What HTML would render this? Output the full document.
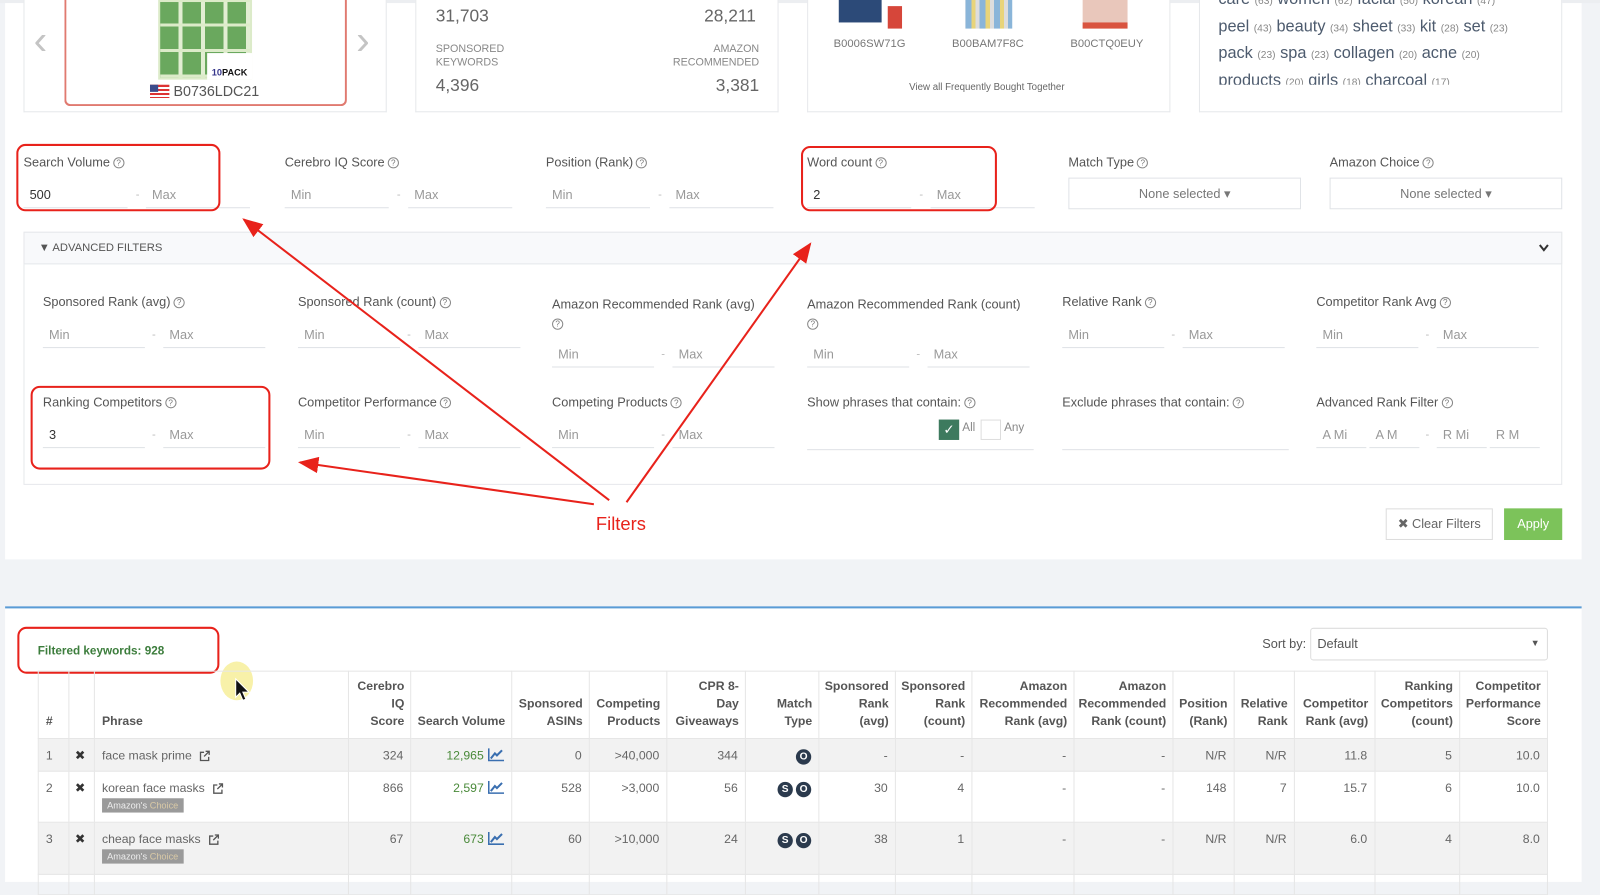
<!DOCTYPE html>
<html><head><meta charset="utf-8">
<style>
*{margin:0;padding:0;box-sizing:border-box}
html,body{width:1600px;height:882px;overflow:hidden;background:#f1f3f6;font-family:"Liberation Sans",sans-serif;color:#555}
#w{position:absolute;left:0;top:0;width:1568px;height:864px;transform-origin:0 0;transform:scale(1.0204,1.0208);background:#f1f3f6}
.a{position:absolute;white-space:nowrap}
.card{position:absolute;background:#fff;border:1px solid #e6e8eb;border-top:none}
.lbl{position:absolute;font-size:12.5px;color:#555;white-space:nowrap}
.q{display:inline-block;width:11px;height:11px;border:1px solid #888;border-radius:50%;font-size:8px;line-height:9px;text-align:center;color:#777;vertical-align:1px;margin-left:3px}
.u{position:absolute;border-bottom:1px solid #dfe2e6;font-size:12.5px;color:#999;padding-left:6px;padding-top:3px;height:23px}
.d{position:absolute;font-size:11px;color:#bbb}
.rb{position:absolute;border:2px solid #e8221b;border-radius:9px}
.sel{position:absolute;background:#fff;border:1px solid #e0e3e7;font-size:12.5px;color:#777;text-align:center;line-height:30px}
table{border-collapse:collapse;position:absolute;left:37px;top:657px;width:1480px;font-size:12px;color:#666}
th{font-weight:bold;color:#555;text-align:right;vertical-align:bottom;padding:0 6px 8px 4px;line-height:17px;border:1px solid #e6e6e6;height:66px}
td{text-align:right;vertical-align:top;padding:9px 7px 0 4px;border:1px solid #e6e6e6}
tr.g td{background:#f2f2f2}
.b{display:inline-block;width:15px;height:15px;border-radius:50%;background:#2b3a4d;color:#fff;font-size:10px;font-weight:bold;text-align:center;line-height:15px;margin-left:3px}
.ac{display:inline-block;background:#9a9a9a;color:#eee;font-size:9px;padding:2px 5px;margin-top:3px}
.ac span{color:#d9c9a6}
.gr{color:#4a8a3a}
.ch{display:inline-block;vertical-align:-2px;margin-left:4px}
small{font-size:10px;color:#888}
</style></head><body><div id="w">
<div class="a" style="left:5px;top:0;width:1545px;height:548px;background:#fff"></div>
<div class="a" style="left:0;top:0;width:1568px;height:3px;background:#eceef1"></div>
<!-- card1 -->
<div class="card" style="left:23px;top:0;width:356px;height:110px"></div>
<div class="a" style="left:63px;top:0;width:277px;height:104px;border:2px solid #e07a70;border-top:none;border-radius:0 0 6px 6px"></div>
<div class="a" style="left:33px;top:18px;font-size:40px;color:#c4c4c4">&#8249;</div>
<div class="a" style="left:349px;top:18px;font-size:40px;color:#c4c4c4">&#8250;</div>
<div class="a" style="left:155px;top:0;width:92px;height:78px;background:#dcebc9"></div>
<div class="a" style="left:157px;top:2px;width:88px;height:74px;background:repeating-linear-gradient(0deg,#dcebc9 0 3px,transparent 3px 25px),repeating-linear-gradient(90deg,#6aa85e 0 18px,#e2eed3 18px 22px)"></div>
<div class="a" style="left:203px;top:52px;width:44px;height:26px;background:#fff;font-size:9px;font-weight:bold;color:#111;text-align:center;padding-top:14px"><span style="color:#35358a">10</span>PACK</div>
<div class="a" style="left:147px;top:83px;width:19px;height:13px;background:repeating-linear-gradient(#d33 0 2px,#fff 2px 4px)"><div style="width:8px;height:7px;background:#3c4c8c"></div></div>
<div class="a" style="left:170px;top:81px;font-size:14px;color:#555">B0736LDC21</div>
<!-- card2 -->
<div class="card" style="left:407px;top:0;width:356px;height:110px"></div>
<div class="a" style="left:427px;top:6px;font-size:17px;color:#666">31,703</div>
<div class="a" style="left:690px;top:6px;font-size:17px;color:#666">28,211</div>
<div class="a" style="left:427px;top:42px;font-size:10.5px;color:#888;line-height:13px">SPONSORED<br>KEYWORDS</div>
<div class="a" style="left:640px;top:42px;width:104px;text-align:right;font-size:10.5px;color:#888;line-height:13px">AMAZON<br>RECOMMENDED</div>
<div class="a" style="left:427px;top:74px;font-size:17px;color:#666">4,396</div>
<div class="a" style="left:700px;top:74px;width:44px;text-align:right;font-size:17px;color:#666">3,381</div>
<!-- card3 -->
<div class="card" style="left:791px;top:0;width:356px;height:110px"></div>
<div class="a" style="left:822px;top:0;width:42px;height:22px;background:#2c4a78"></div>
<div class="a" style="left:870px;top:6px;width:14px;height:22px;background:#d6463a"></div>
<div class="a" style="left:946px;top:0;width:46px;height:28px;background:repeating-linear-gradient(90deg,#8ab5d9 0 6px,#e8d47a 6px 10px,#ddd 10px 14px)"></div>
<div class="a" style="left:1061px;top:0;width:44px;height:28px;background:#e9c7bb;border-bottom:6px solid #d9543f"></div>
<div class="a" style="left:817px;top:37px;font-size:11px;color:#777">B0006SW71G</div>
<div class="a" style="left:933px;top:37px;font-size:11px;color:#777">B00BAM7F8C</div>
<div class="a" style="left:1049px;top:37px;font-size:11px;color:#777">B00CTQ0EUY</div>
<div class="a" style="left:891px;top:80px;font-size:9.5px;color:#666">View all Frequently Bought Together</div>
<!-- card4 -->
<div class="card" style="left:1175px;top:0;width:356px;height:110px"></div>
<div class="a" style="left:1194px;top:0;width:330px;height:83px;overflow:hidden">
<div style="position:absolute;left:0;top:-12px;font-size:16px;color:#4d5b6e;line-height:24.5px">care <small>(63)</small> women <small>(62)</small> facial <small>(50)</small> korean <small>(47)</small><br>peel <small>(43)</small> beauty <small>(34)</small> sheet <small>(33)</small> kit <small>(28)</small> set <small>(23)</small><br>pack <small>(23)</small> spa <small>(23)</small> collagen <small>(20)</small> acne <small>(20)</small><br>products <small>(20)</small> girls <small>(18)</small> charcoal <small>(17)</small></div></div>

<!-- main filter row -->
<div class="lbl" style="left:23px;top:152px">Search Volume<span class="q">?</span></div>
<div class="u" style="left:23px;top:181px;width:102px;color:#333">500</div><div class="d" style="left:133px;top:185px">-</div><div class="u" style="left:143px;top:181px;width:102px">Max</div>
<div class="lbl" style="left:279px;top:152px">Cerebro IQ Score<span class="q">?</span></div>
<div class="u" style="left:279px;top:181px;width:102px">Min</div><div class="d" style="left:389px;top:185px">-</div><div class="u" style="left:400px;top:181px;width:102px">Max</div>
<div class="lbl" style="left:535px;top:152px">Position (Rank)<span class="q">?</span></div>
<div class="u" style="left:535px;top:181px;width:102px">Min</div><div class="d" style="left:645px;top:185px">-</div><div class="u" style="left:656px;top:181px;width:102px">Max</div>
<div class="lbl" style="left:791px;top:152px">Word count<span class="q">?</span></div>
<div class="u" style="left:791px;top:181px;width:102px;color:#333">2</div><div class="d" style="left:901px;top:185px">-</div><div class="u" style="left:912px;top:181px;width:102px">Max</div>
<div class="lbl" style="left:1047px;top:152px">Match Type<span class="q">?</span></div>
<div class="sel" style="left:1047px;top:174px;width:228px;height:31px">None selected &#9662;</div>
<div class="lbl" style="left:1303px;top:152px">Amazon Choice<span class="q">?</span></div>
<div class="sel" style="left:1303px;top:174px;width:228px;height:31px">None selected &#9662;</div>
<div class="rb" style="left:16px;top:141px;width:200px;height:66px"></div>
<div class="rb" style="left:785px;top:143px;width:192px;height:64px"></div>

<!-- advanced -->
<div class="a" style="left:23px;top:227px;width:1508px;height:248px;border:1px solid #e6e8eb;background:#fff"></div>
<div class="a" style="left:23px;top:227px;width:1508px;height:32px;border:1px solid #e6e8eb;background:#f8f9fb"></div>
<div class="a" style="left:38px;top:237px;font-size:11px;color:#555">&#9660; ADVANCED FILTERS</div>
<svg class="a" style="left:1508px;top:239px" width="10" height="8"><path d="M1 1 L5 6 L9 1" stroke="#333" stroke-width="2" fill="none"/></svg>

<div class="lbl" style="left:42px;top:289px">Sponsored Rank (avg)<span class="q">?</span></div>
<div class="u" style="left:42px;top:318px;width:100px">Min</div><div class="d" style="left:149px;top:322px">-</div><div class="u" style="left:160px;top:318px;width:100px">Max</div>
<div class="lbl" style="left:292px;top:289px">Sponsored Rank (count)<span class="q">?</span></div>
<div class="u" style="left:292px;top:318px;width:100px">Min</div><div class="d" style="left:399px;top:322px">-</div><div class="u" style="left:410px;top:318px;width:100px">Max</div>
<div class="lbl" style="left:541px;top:289px;line-height:19px">Amazon Recommended Rank (avg)<br><span class="q" style="margin:0">?</span></div>
<div class="u" style="left:541px;top:337px;width:100px">Min</div><div class="d" style="left:648px;top:341px">-</div><div class="u" style="left:659px;top:337px;width:100px">Max</div>
<div class="lbl" style="left:791px;top:289px;line-height:19px">Amazon Recommended Rank (count)<br><span class="q" style="margin:0">?</span></div>
<div class="u" style="left:791px;top:337px;width:100px">Min</div><div class="d" style="left:898px;top:341px">-</div><div class="u" style="left:909px;top:337px;width:100px">Max</div>
<div class="lbl" style="left:1041px;top:289px">Relative Rank<span class="q">?</span></div>
<div class="u" style="left:1041px;top:318px;width:100px">Min</div><div class="d" style="left:1148px;top:322px">-</div><div class="u" style="left:1159px;top:318px;width:100px">Max</div>
<div class="lbl" style="left:1290px;top:289px">Competitor Rank Avg<span class="q">?</span></div>
<div class="u" style="left:1290px;top:318px;width:100px">Min</div><div class="d" style="left:1397px;top:322px">-</div><div class="u" style="left:1408px;top:318px;width:100px">Max</div>

<div class="lbl" style="left:42px;top:387px">Ranking Competitors<span class="q">?</span></div>
<div class="u" style="left:42px;top:416px;width:100px;color:#333">3</div><div class="d" style="left:149px;top:420px">-</div><div class="u" style="left:160px;top:416px;width:100px">Max</div>
<div class="lbl" style="left:292px;top:387px">Competitor Performance<span class="q">?</span></div>
<div class="u" style="left:292px;top:416px;width:100px">Min</div><div class="d" style="left:399px;top:420px">-</div><div class="u" style="left:410px;top:416px;width:100px">Max</div>
<div class="lbl" style="left:541px;top:387px">Competing Products<span class="q">?</span></div>
<div class="u" style="left:541px;top:416px;width:100px">Min</div><div class="d" style="left:648px;top:420px">-</div><div class="u" style="left:659px;top:416px;width:100px">Max</div>
<div class="lbl" style="left:791px;top:387px">Show phrases that contain:<span class="q">?</span></div>
<div class="a" style="left:791px;top:440px;width:222px;border-bottom:1px solid #dfe2e6"></div>
<div class="a" style="left:920px;top:411px;width:20px;height:20px;background:#3d7a5e;color:#fff;font-size:13px;text-align:center;line-height:20px">&#10003;</div>
<div class="a" style="left:943px;top:413px;font-size:11.5px;color:#888">All</div>
<div class="a" style="left:961px;top:411px;width:20px;height:20px;border:1px solid #ddd"></div>
<div class="a" style="left:984px;top:413px;font-size:11.5px;color:#888">Any</div>
<div class="lbl" style="left:1041px;top:387px">Exclude phrases that contain:<span class="q">?</span></div>
<div class="a" style="left:1041px;top:440px;width:222px;border-bottom:1px solid #dfe2e6"></div>
<div class="lbl" style="left:1290px;top:387px">Advanced Rank Filter<span class="q">?</span></div>
<div class="u" style="left:1290px;top:416px;width:49px">A Mi</div><div class="u" style="left:1342px;top:416px;width:49px">A M</div><div class="d" style="left:1397px;top:420px">-</div><div class="u" style="left:1408px;top:416px;width:49px">R Mi</div><div class="u" style="left:1460px;top:416px;width:49px">R M</div>
<div class="rb" style="left:30px;top:378px;width:235px;height:82px"></div>

<div class="a" style="left:1358px;top:498px;width:105px;height:31px;border:1px solid #ddd;background:#fff;font-size:12.5px;color:#666;text-align:center;line-height:29px">&#10006; Clear Filters</div>
<div class="a" style="left:1474px;top:498px;width:57px;height:31px;background:#7cc35a;font-size:12.5px;color:#fff;text-align:center;line-height:31px">Apply</div>

<svg class="a" style="left:0;top:0" width="1568" height="864">
<defs><marker id="m" markerWidth="10" markerHeight="8" refX="9" refY="4" orient="auto"><path d="M0,0 L10,4 L0,8 z" fill="#e8221b"/></marker></defs>
<g stroke="#e8221b" stroke-width="2" fill="none">
<line x1="597" y1="490" x2="239" y2="215" marker-end="url(#m)"/>
<line x1="614" y1="492" x2="794" y2="239" marker-end="url(#m)"/>
<line x1="582" y1="494" x2="294" y2="453" marker-end="url(#m)"/>
</g></svg>
<div class="a" style="left:584px;top:503px;font-size:18px;color:#e8221b">Filters</div>

<!-- bottom -->
<div class="a" style="left:5px;top:594px;width:1545px;height:270px;background:#fff;border-top:2px solid #5a9bd5"></div>
<div class="a" style="left:37px;top:632px;font-size:11.5px;font-weight:bold;color:#3c7d3c">Filtered keywords: 928</div>
<div class="rb" style="left:17px;top:614px;width:198px;height:46px"></div>
<div class="a" style="left:1237px;top:624px;font-size:12.5px;color:#555">Sort by:</div>
<div class="a" style="left:1284px;top:615px;width:233px;height:32px;border:1px solid #ddd;border-radius:3px;font-size:12.5px;color:#555;padding:8px 6px">Default<span style="position:absolute;right:7px;top:9px;font-size:9px">&#9660;</span></div>
<div class="a" style="left:216px;top:648px;width:32px;height:38px;border-radius:50%;background:#f7ef9a;opacity:.85"></div>
<svg class="a" style="left:230px;top:664px" width="16" height="24"><path d="M1 1 L1 19 L5 15 L8 22 L11 21 L8 14 L14 14 Z" fill="#111" stroke="#fff" stroke-width="1"/></svg>

<table>
<colgroup><col style="width:30px"><col style="width:25px"><col style="width:250px"><col style="width:61px"><col style="width:99px"><col style="width:76px"><col style="width:76px"><col style="width:77px"><col style="width:72px"><col style="width:75px"><col style="width:75px"><col style="width:100px"><col style="width:96px"><col style="width:60px"><col style="width:59px"><col style="width:79px"><col style="width:83px"><col style="width:86px"></colgroup>
<tr><th style="text-align:left;padding-left:7px">#</th><th></th><th style="text-align:left;padding-left:7px">Phrase</th><th>Cerebro<br>IQ<br>Score</th><th>Search Volume</th><th>Sponsored<br>ASINs</th><th>Competing<br>Products</th><th>CPR 8-<br>Day<br>Giveaways</th><th>Match<br>Type</th><th>Sponsored<br>Rank<br>(avg)</th><th>Sponsored<br>Rank<br>(count)</th><th>Amazon<br>Recommended<br>Rank (avg)</th><th>Amazon<br>Recommended<br>Rank (count)</th><th>Position<br>(Rank)</th><th>Relative<br>Rank</th><th>Competitor<br>Rank (avg)</th><th>Ranking<br>Competitors<br>(count)</th><th>Competitor<br>Performance<br>Score</th></tr>
<tr class="g" style="height:32px"><td style="text-align:left;padding-left:7px">1</td><td style="text-align:center;color:#333">&#10006;</td><td style="text-align:left;padding-left:7px">face mask prime <svg class="ch" width="11" height="11" viewBox="0 0 11 11"><path d="M5 2H1.5v8h8V6.5M6.5 1H10v3.5M10 1 5 6" stroke="#555" stroke-width="1.3" fill="none"/></svg></td><td>324</td><td class="gr">12,965<svg class="ch" width="16" height="13" viewBox="0 0 16 13"><path d="M1 0v12h15" stroke="#3a6fb0" stroke-width="1.5" fill="none"/><path d="M3 10 L7 5 L9 7 L14 2" stroke="#3a6fb0" stroke-width="2" fill="none"/></svg></td><td>0</td><td>&gt;40,000</td><td>344</td><td><span class="b">O</span></td><td>-</td><td>-</td><td>-</td><td>-</td><td>N/R</td><td>N/R</td><td>11.8</td><td>5</td><td>10.0</td></tr>
<tr style="height:50px"><td style="text-align:left;padding-left:7px">2</td><td style="text-align:center;color:#333">&#10006;</td><td style="text-align:left;padding-left:7px">korean face masks <svg class="ch" width="11" height="11" viewBox="0 0 11 11"><path d="M5 2H1.5v8h8V6.5M6.5 1H10v3.5M10 1 5 6" stroke="#555" stroke-width="1.3" fill="none"/></svg><br><span class="ac">Amazon's <span>Choice</span></span></td><td>866</td><td class="gr">2,597<svg class="ch" width="16" height="13" viewBox="0 0 16 13"><path d="M1 0v12h15" stroke="#3a6fb0" stroke-width="1.5" fill="none"/><path d="M3 10 L7 5 L9 7 L14 2" stroke="#3a6fb0" stroke-width="2" fill="none"/></svg></td><td>528</td><td>&gt;3,000</td><td>56</td><td><span class="b">S</span><span class="b">O</span></td><td>30</td><td>4</td><td>-</td><td>-</td><td>148</td><td>7</td><td>15.7</td><td>6</td><td>10.0</td></tr>
<tr class="g" style="height:51px"><td style="text-align:left;padding-left:7px">3</td><td style="text-align:center;color:#333">&#10006;</td><td style="text-align:left;padding-left:7px">cheap face masks <svg class="ch" width="11" height="11" viewBox="0 0 11 11"><path d="M5 2H1.5v8h8V6.5M6.5 1H10v3.5M10 1 5 6" stroke="#555" stroke-width="1.3" fill="none"/></svg><br><span class="ac">Amazon's <span>Choice</span></span></td><td>67</td><td class="gr">673<svg class="ch" width="16" height="13" viewBox="0 0 16 13"><path d="M1 0v12h15" stroke="#3a6fb0" stroke-width="1.5" fill="none"/><path d="M3 10 L7 5 L9 7 L14 2" stroke="#3a6fb0" stroke-width="2" fill="none"/></svg></td><td>60</td><td>&gt;10,000</td><td>24</td><td><span class="b">S</span><span class="b">O</span></td><td>38</td><td>1</td><td>-</td><td>-</td><td>N/R</td><td>N/R</td><td>6.0</td><td>4</td><td>8.0</td></tr>
<tr style="height:20px"><td></td><td></td><td></td><td></td><td></td><td></td><td></td><td></td><td></td><td></td><td></td><td></td><td></td><td></td><td></td><td></td><td></td><td></td></tr>
</table>
</div></body></html>
